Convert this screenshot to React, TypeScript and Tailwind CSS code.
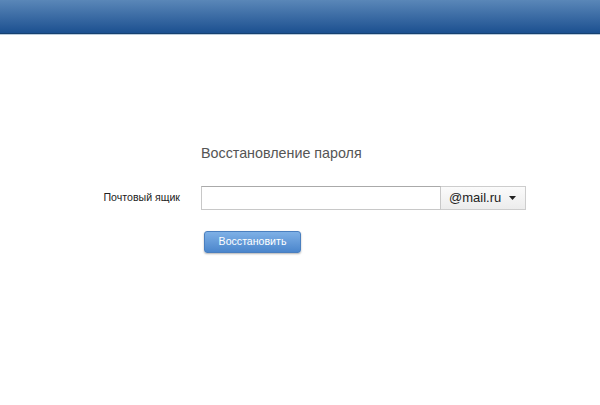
export default function App() {
  return (
    <div className="min-h-[405px] bg-white font-['Liberation_Sans',Arial,sans-serif]">
      {/* Header */}
      <div className="h-[34px] bg-gradient-to-b from-[#5a87b8] to-[#1b5090] border-b border-[#16406f] shadow-[0_1px_0_#b9cbdc]" />

      {/* Form */}
      <div className="pt-[110px]">
        <div className="pl-[201px] text-[14.3px] leading-[18px] text-[#555]">
          Восстановление пароля
        </div>

        <div className="mt-[24px] flex items-center">
          <label className="w-[180px] text-right text-[10.6px] text-[#222]">
            Почтовый ящик
          </label>
          <div className="ml-[21px] flex h-[24px]">
            <input
              type="text"
              className="w-[240px] h-full border border-[#c8c8c8] border-t-[#aaa] bg-white px-1 text-[13px] outline-none"
            />
            <div className="w-[85px] h-full flex items-center justify-between border border-l-0 border-[#cdcdcd] bg-gradient-to-b from-[#fbfbfb] to-[#ececec] pl-[8px] pr-[9px] text-[13px] text-[#222]">
              <span>@mail.ru</span>
              <svg width="7" height="4" viewBox="0 0 7 4">
                <path d="M0 0h7L3.5 4z" fill="#222" />
              </svg>
            </div>
          </div>
        </div>

        <div className="mt-[18px] pl-[204px]">
          <button className="w-[97px] h-[22px] rounded-[3px] border border-[#4a7fbf] bg-gradient-to-b from-[#7eb0e6] to-[#4b86cc] text-[10.6px] text-white shadow-[0_1px_2px_rgba(0,0,0,0.3)]">
            Восстановить
          </button>
        </div>
      </div>
    </div>
  );
}
